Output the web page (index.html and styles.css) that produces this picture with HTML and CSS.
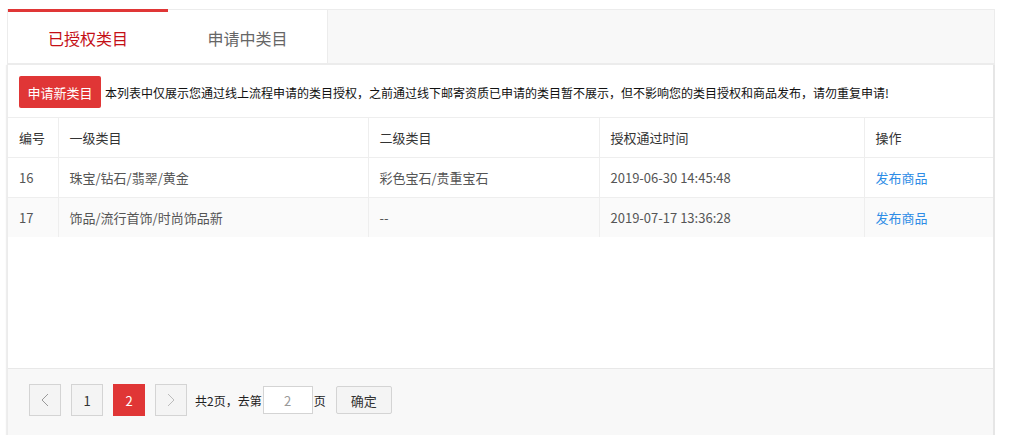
FILE: index.html
```html
<!DOCTYPE html>
<html lang="zh-CN">
<head>
<meta charset="utf-8">
<title>类目管理</title>
<link rel="stylesheet" href="styles.css">
</head>
<body>
<div class="wrap">
  <div class="tabs">
    <div class="tab active">已授权类目</div>
    <div class="tab">申请中类目</div>
  </div>
  <div class="panel">
    <div class="toolbar">
      <button class="btn-primary">申请新类目</button>
      <span class="notice">本列表中仅展示您通过线上流程申请的类目授权，之前通过线下邮寄资质已申请的类目暂不展示，但不影响您的类目授权和商品发布，请勿重复申请!</span>
    </div>
    <table class="grid">
      <colgroup>
        <col class="c1"><col class="c2"><col class="c3"><col class="c4"><col class="c5">
      </colgroup>
      <thead>
        <tr><th>编号</th><th>一级类目</th><th>二级类目</th><th>授权通过时间</th><th>操作</th></tr>
      </thead>
      <tbody>
        <tr><td>16</td><td>珠宝/钻石/翡翠/黄金</td><td>彩色宝石/贵重宝石</td><td>2019-06-30 14:45:48</td><td><a class="link">发布商品</a></td></tr>
        <tr class="alt"><td>17</td><td>饰品/流行首饰/时尚饰品新</td><td>--</td><td>2019-07-17 13:36:28</td><td><a class="link">发布商品</a></td></tr>
      </tbody>
    </table>
    <div class="spacer"></div>
    <div class="footer">
      <div class="pager">
        <span class="pg arrow"><svg width="8" height="14" viewBox="0 0 8 14"><path d="M7 1L1 7l6 6" fill="none" stroke="#999" stroke-width="1"/></svg></span>
        <span class="pg">1</span>
        <span class="pg cur">2</span>
        <span class="pg arrow"><svg width="8" height="14" viewBox="0 0 8 14"><path d="M1 1l6 6-6 6" fill="none" stroke="#bbb" stroke-width="1"/></svg></span>
        <span class="ptext">共2页，去第</span>
        <input class="pinput" value="2">
        <span class="ptext">页</span>
        <button class="pbtn">确定</button>
      </div>
    </div>
  </div>
</div>
</body>
</html>
```
FILE: styles.css
```css
html, body {
  margin: 0;
  padding: 0;
  background: #fff;
  font-family: "Noto Sans CJK SC", "Noto Sans", sans-serif;
  color: #333;
}
.wrap {
  margin: 9px 0 0 7px;
  width: 988px;
}
.tabs {
  display: flex;
  height: 53px;
  background: #f8f8f8;
  border: 1px solid #ececec;
  border-bottom: 2px solid #ececec;
  box-sizing: content-box;
}
.tab {
  width: 160px;
  background: #fff;
  border-right: 1px solid #ececec;
  display: flex;
  align-items: center;
  justify-content: center;
  font-size: 16px;
  color: #666;
  box-sizing: border-box;
  padding-top: 2px;
}
.tab.active {
  color: #c40f16;
  border-top: 3px solid #e03636;
  margin-top: -1px;
  border-right: none;
  padding-top: 0;
}
.panel {
  width: 985px;
  border-right: 2px solid #e6e6e6;
  border-left: 1px solid #ececec;
  box-shadow: -1px 0 1px #eee;
}
.toolbar {
  display: flex;
  align-items: center;
  padding: 11px 0 9px 11px;
  height: 32px;
  border-bottom: 1px solid #eee;
}
.btn-primary {
  height: 32px;
  width: 82px;
  background: #e03636;
  color: #fff;
  border: none;
  border-radius: 2px;
  font-family: inherit;
  font-size: 13px;
  padding: 0;
}
.notice {
  margin-left: 4px;
  font-size: 12px;
  color: #111;
  white-space: nowrap;
}
.grid {
  width: 100%;
  border-collapse: collapse;
  table-layout: fixed;
  font-size: 13px;
}
.c1 { width: 50px; }
.c2 { width: 310px; }
.c3 { width: 231px; }
.c4 { width: 265px; }
.grid th, .grid td {
  text-align: left;
  font-weight: normal;
  padding: 0 0 0 11px;
  height: 39px;
  border-bottom: 1px solid #eee;
  border-right: 1px solid #eee;
  color: #333;
  white-space: nowrap;
}
.grid td { height: 39px; color: #555; }
.grid th:last-child, .grid td:last-child { border-right: none; }
.grid tr.alt td { background: #fafafa; border-bottom: none; }
.link { color: #2d8ce6; }
.spacer { height: 131px; }
.footer {
  background: #f8f8f8;
  border-top: 1px solid #e8e8e8;
  padding: 15px 0 30px 21px;
}
.pager {
  display: flex;
  align-items: center;
}
.pg {
  width: 32px;
  height: 32px;
  box-sizing: border-box;
  border: 1px solid #d4d4d4;
  background: #f4f4f4;
  display: flex;
  align-items: center;
  justify-content: center;
  font-size: 13px;
  color: #333;
  margin-right: 10px;
}
.pg.cur {
  background: #e03636;
  border-color: #e03636;
  color: #fff;
}
.ptext {
  font-size: 12px;
  color: #222;
  margin-left: -2px;
}
.pinput {
  width: 50px;
  height: 28px;
  box-sizing: border-box;
  border: 1px solid #d4d4d4;
  background: #fff;
  text-align: center;
  font-family: inherit;
  font-size: 13px;
  color: #999;
  margin: 0 3px 0 1px;
  padding: 0;
}
.pbtn {
  margin-left: 10px;
  width: 56px;
  height: 28px;
  border: 1px solid #d4d4d4;
  background: #f4f4f4;
  border-radius: 2px;
  font-family: inherit;
  font-size: 13px;
  color: #333;
  padding: 0;
}
```
